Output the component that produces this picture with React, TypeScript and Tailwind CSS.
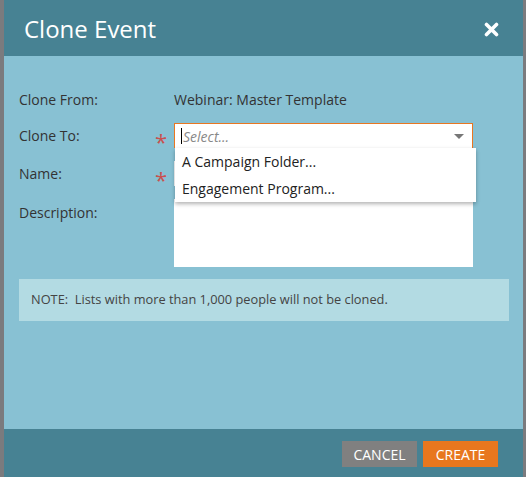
import React from "react";

export default function App() {
  return (
    <div
      className="w-[526px] h-[477px] bg-[#7b7b7e] flex overflow-hidden"
      style={{ fontFamily: "'Open Sans', 'Liberation Sans', sans-serif" }}
    >
      <div className="ml-[4px] w-[519px] h-full flex flex-col">
        {/* Header */}
        <div className="h-[56px] bg-[#478293] flex items-center justify-between pl-[20px] pr-[24px] shrink-0">
          <div className="text-white text-[24px] leading-none pt-[2px]">Clone Event</div>
          <svg width="15" height="15" viewBox="0 0 15 15" className="mt-[2px]">
            <path d="M2.5 2.5 L12.5 12.5 M12.5 2.5 L2.5 12.5" stroke="#fff" strokeWidth="3.6" strokeLinecap="round" />
          </svg>
        </div>

        {/* Body */}
        <div className="flex-1 bg-[#88c1d3] pl-[15px] pr-[14px] pt-[32px] flex flex-col text-[14px] text-[#333]">
          <div className="flex h-[22px] items-center">
            <div className="w-[155px]">Clone From:</div>
            <div>Webinar: Master Template</div>
          </div>

          <div className="flex h-[25px] items-center mt-[13px]">
            <div className="w-[136px]">Clone To:</div>
            <div className="w-[19px] text-[#c9504f] text-[22px] leading-none pt-[11px]">*</div>
            <div className="relative w-[299px] h-[25px]">
              <div className="w-full h-full bg-white border border-[#e87722] border-b-0 flex items-center pl-[6px] pr-[6px]">
                <div className="w-[1px] h-[16px] bg-black mr-[1px]"></div>
                <span className="italic text-[#888] text-[14px]">Select...</span>
                <div className="flex-1"></div>
                <div className="w-0 h-0 border-l-[5px] border-r-[5px] border-t-[5px] border-l-transparent border-r-transparent border-t-[#777] mr-[2px]"></div>
              </div>
              <div className="absolute left-[1px] top-[25px] w-[301px] bg-white shadow-[0_2px_4px_rgba(0,0,0,0.3)] z-10 text-[#222]">
                <div className="h-[27px] flex items-center pl-[7px]">A Campaign Folder...</div>
                <div className="h-[27px] flex items-center pl-[7px]">Engagement Program...</div>
              </div>
            </div>
          </div>

          <div className="flex h-[25px] items-center mt-[13px]">
            <div className="w-[136px]">Name:</div>
            <div className="w-[19px] text-[#c9504f] text-[22px] leading-none pt-[11px]">*</div>
            <div className="w-[299px] h-[25px] bg-white"></div>
          </div>

          <div className="flex mt-[13px]">
            <div className="w-[155px] pt-[3px]">Description:</div>
            <div className="w-[299px] h-[68px] bg-white"></div>
          </div>

          <div className="mt-[12px] h-[42px] bg-[#b3dbe3] flex items-center pl-[12px] text-[12.8px] text-[#444]">
            NOTE:&nbsp; Lists with more than 1,000 people will not be cloned.
          </div>
        </div>

        {/* Footer */}
        <div className="h-[48px] bg-[#478293] flex items-start justify-end pt-[12px] pr-[25px] gap-[6px] shrink-0">
          <div className="w-[75px] h-[26px] bg-[#808080] text-white text-[14px] flex items-center justify-center">CANCEL</div>
          <div className="w-[75px] h-[26px] bg-[#e8771e] text-white text-[14px] flex items-center justify-center">CREATE</div>
        </div>
      </div>
    </div>
  );
}
